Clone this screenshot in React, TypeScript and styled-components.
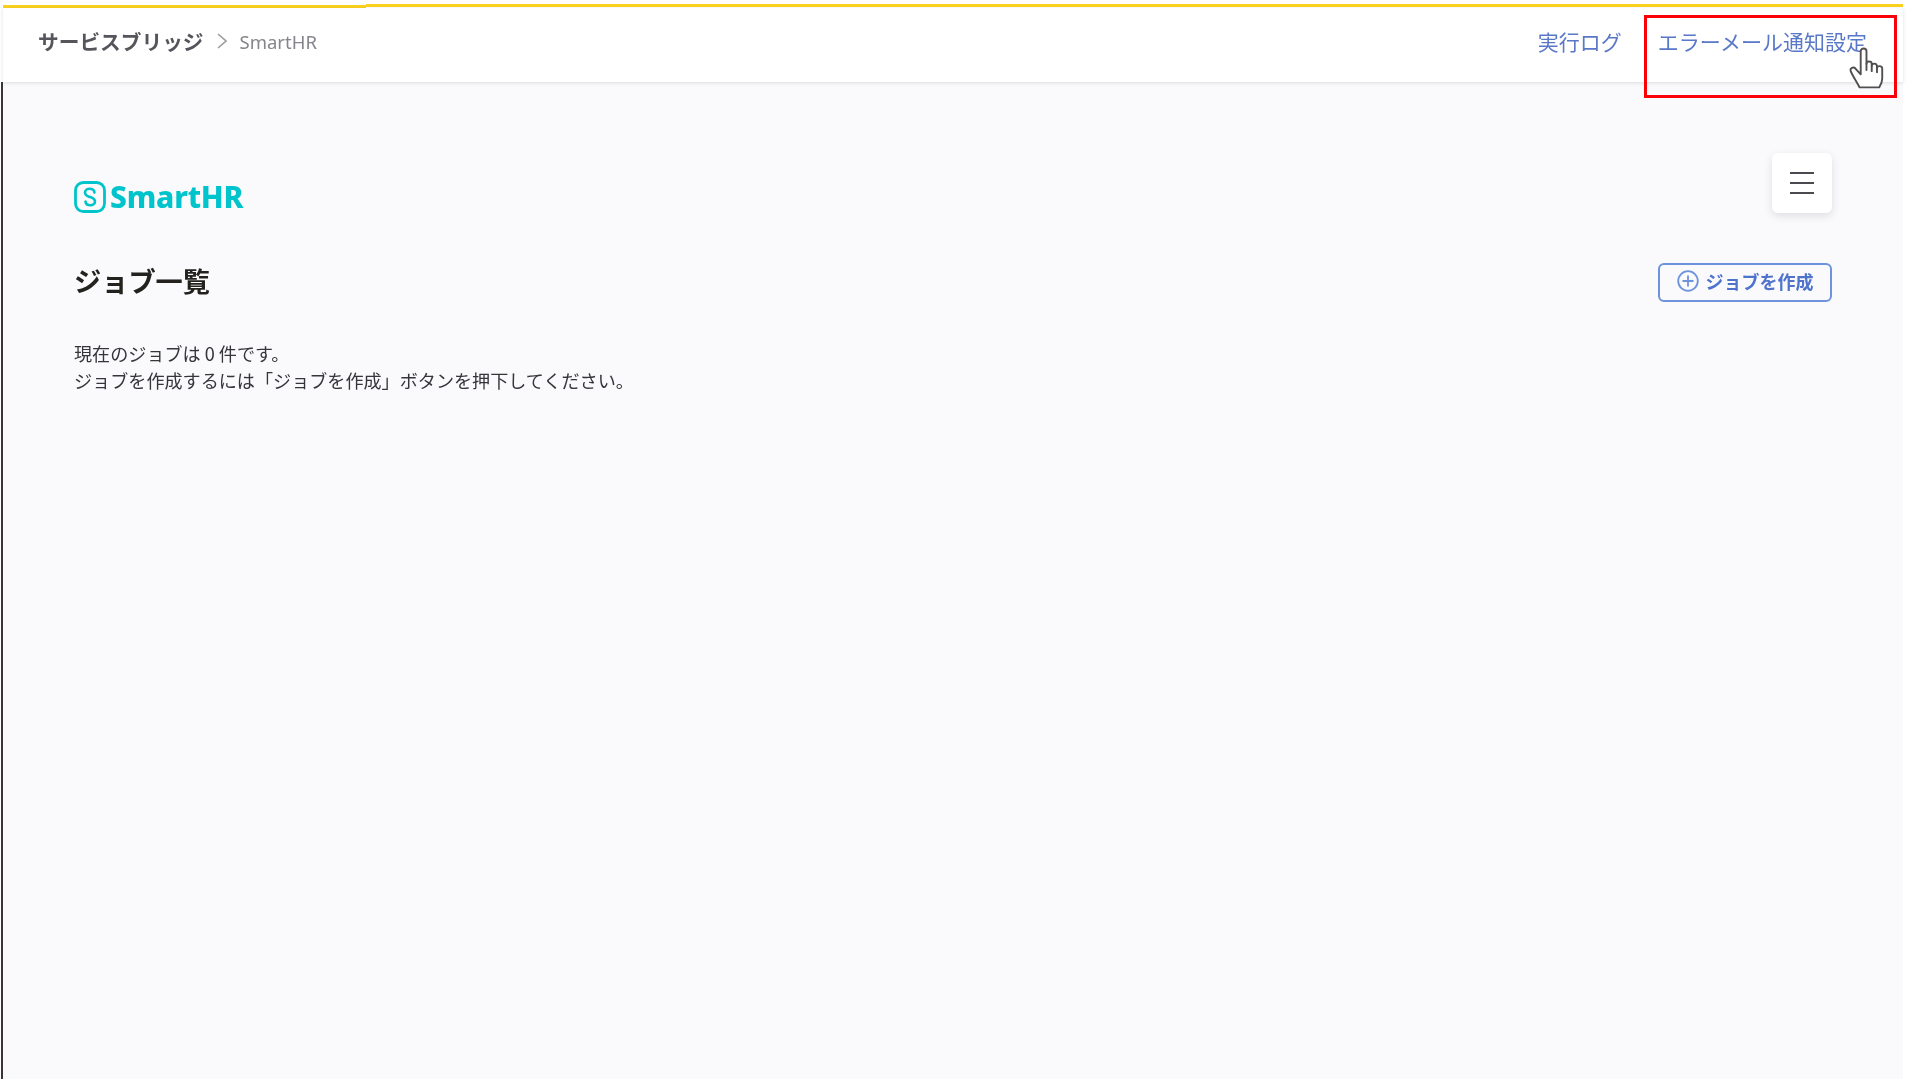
import React from "react";
import styled, { createGlobalStyle } from "styled-components";

const Global = createGlobalStyle`
  html, body { margin: 0; padding: 0; background: #fff; }
  body { font-family: "Noto Sans CJK JP", "Noto Sans", sans-serif; }
`;

const Page = styled.div`
  position: relative;
  width: 1912px;
  height: 1079px;
  overflow: hidden;
  background: #fff;
  display: flex;
  flex-direction: column;
  filter: blur(0.4px);
`;

const TopRule = styled.div`
  display: flex;
  align-items: flex-start;
  height: 8px;
  padding-top: 4px;
  margin-left: 3px;
  width: 1900px;
  box-sizing: border-box;
`;

const RuleSegment = styled.div<{ $width?: number; $offset: number }>`
  height: 3px;
  margin-top: ${(p) => p.$offset}px;
  background: #fbd21f;
  ${(p) => (p.$width ? `width: ${p.$width}px;` : "flex: 1;")}
`;

const Header = styled.header`
  width: 1900px;
  margin-left: 3px;
  height: 74px;
  box-sizing: border-box;
  display: flex;
  align-items: center;
  justify-content: space-between;
  padding: 0 36px 8px 35px;
  background: #fff;
  box-shadow: 0 1px 4px rgba(60, 60, 70, 0.16);
  position: relative;
  z-index: 1;
`;

const Breadcrumb = styled.nav`
  display: flex;
  align-items: center;
  gap: 13px;
`;

const BreadcrumbRoot = styled.span`
  font-size: 20.7px;
  font-weight: 700;
  color: #55565c;
`;

const BreadcrumbCurrent = styled.span`
  font-family: "Noto Sans", sans-serif;
  font-size: 18.5px;
  color: #85868c;
`;

const HeaderLinks = styled.div`
  display: flex;
  gap: 36px;
`;

const HeaderLink = styled.a`
  font-size: 21px;
  color: #5a78c8;
  text-decoration: none;
`;

const Main = styled.main`
  flex: 1;
  width: 1902px;
  margin-left: 1px;
  box-sizing: border-box;
  border-left: 2px solid #3a3338;
  background: #fafafc;
  padding: 71px 71px 0;
`;

const LogoRow = styled.div`
  display: flex;
  justify-content: space-between;
  align-items: flex-start;
`;

const Logo = styled.div`
  display: flex;
  align-items: center;
  gap: 4px;
  margin-top: 28px;
  color: #00c4cc;
`;

const LogoText = styled.span`
  font-family: "Noto Sans", sans-serif;
  font-size: 30px;
  line-height: 32px;
  font-weight: 800;
  letter-spacing: -0.2px;
`;

const MenuButton = styled.button`
  width: 60px;
  height: 60px;
  border: none;
  border-radius: 6px;
  background: #fff;
  box-shadow: 0 3px 8px rgba(60, 60, 70, 0.14);
  display: flex;
  flex-direction: column;
  align-items: center;
  justify-content: center;
  gap: 7.5px;
  padding: 0;
`;

const MenuBar = styled.span`
  width: 24px;
  height: 2.5px;
  background: #4a4a50;
`;

const TitleRow = styled.div`
  display: flex;
  justify-content: space-between;
  align-items: center;
  margin-top: 50px;
  height: 39px;
`;

const Title = styled.h1`
  margin: 0 0 6px;
  font-size: 27.2px;
  font-weight: 700;
  color: #23221f;
`;

const CreateButton = styled.button`
  height: 39px;
  width: 174px;
  box-sizing: border-box;
  border: 2px solid #6d93dc;
  border-radius: 6px;
  background: #fafafc;
  display: flex;
  align-items: center;
  justify-content: center;
  gap: 7px;
  padding: 0 0 3px;
  font-family: inherit;
  font-size: 18px;
  font-weight: 700;
  color: #4f72cc;
`;

const Description = styled.p`
  margin: 38px 0 0;
  font-size: 18.1px;
  line-height: 27px;
  color: #35353a;
`;

const Annotation = styled.div`
  position: absolute;
  left: 1644px;
  top: 15px;
  width: 253px;
  height: 83px;
  box-sizing: border-box;
  border: 3.5px solid #fa0008;
  z-index: 2;
`;

const Cursor = styled.svg`
  position: absolute;
  left: 1849px;
  top: 47px;
  width: 36px;
  height: 42px;
  z-index: 3;
`;

export default function App() {
  return (
    <Page>
      <Global />
      <TopRule>
        <RuleSegment $width={363} $offset={1} />
        <RuleSegment $offset={0} />
      </TopRule>
      <Header>
        <Breadcrumb>
          <BreadcrumbRoot>サービスブリッジ</BreadcrumbRoot>
          <svg width="10" height="16" viewBox="0 0 10 16" fill="none" stroke="#9a9ba0" strokeWidth="1.6">
            <path d="M1 1l8 7-8 7" />
          </svg>
          <BreadcrumbCurrent>SmartHR</BreadcrumbCurrent>
        </Breadcrumb>
        <HeaderLinks>
          <HeaderLink>実行ログ</HeaderLink>
          <HeaderLink>エラーメール通知設定</HeaderLink>
        </HeaderLinks>
      </Header>
      <Main>
        <LogoRow>
          <Logo>
            <svg width="32" height="32" viewBox="0 0 32 32" fill="none" stroke="#00c4cc">
              <rect x="1.5" y="1.5" width="29" height="29" rx="8" strokeWidth="2.8" />
              <path d="M20.5 11.5c-.5-5-9.500-5-9.500 0 0 2.500 2 3.500 4.500 4.500M11.500 20.500c.5 5 9.500 5 9.500 0 0-2.500-2-3.500-4.500-4.500" strokeWidth="2.6" strokeLinecap="round" />
            </svg>
            <LogoText>SmartHR</LogoText>
          </Logo>
          <MenuButton aria-label="メニュー">
            <MenuBar />
            <MenuBar />
            <MenuBar />
          </MenuButton>
        </LogoRow>
        <TitleRow>
          <Title>ジョブ一覧</Title>
          <CreateButton>
            <svg width="22" height="22" viewBox="0 0 22 22" fill="none" stroke="#6d93dc" strokeWidth="1.8">
              <circle cx="11" cy="11" r="9.800" />
              <path d="M11 5.500v11M5.500 11h11" />
            </svg>
            ジョブを作成
          </CreateButton>
        </TitleRow>
        <Description>
          現在のジョブは 0 件です。
          <br />
          ジョブを作成するには「ジョブを作成」ボタンを押下してください。
        </Description>
      </Main>
      <Annotation />
      <Cursor viewBox="0 0 34 40" fill="#fff" stroke="#505052" strokeWidth="1.8" strokeLinejoin="round" strokeLinecap="round">
        <path d="M10 38.500C7 33 2.500 26 1.500 23c-1-3 2.500-4.500 4.500-2.500l5 5.500V4c0-3.500 5.500-3.500 5.500 0v12c0-3 5-3 5 0v2c0-3 5-3 5 .5V20c0-2.500 5-2.500 5 .5V30c0 4-1.500 6-3 8.500z" />
        <path d="M16.500 16v6M21.500 18v5M26.500 20v4" fill="none" />
      </Cursor>
    </Page>
  );
}
